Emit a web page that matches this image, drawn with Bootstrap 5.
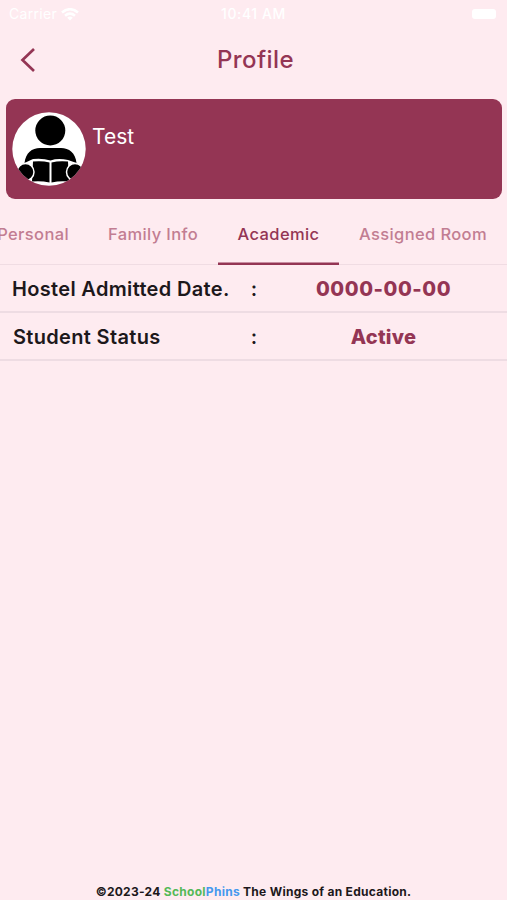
<!DOCTYPE html>
<html lang="en">
<head>
<meta charset="utf-8">
<meta name="viewport" content="width=device-width, initial-scale=1">
<title>Profile</title>
<link rel="stylesheet" href="https://cdn.jsdelivr.net/npm/bootstrap@5.3.0/dist/css/bootstrap.min.css">
<style>
  :root { --wine: #943554; --blush: #feebf0; }
  body { background: var(--blush); font-family: Inter, "Liberation Sans", sans-serif; color: #1d181b; }
  svg { display: block; flex: none; }
  .status-bar { height: 28px; color: #fff; font-size: 14px; line-height: 28px; padding: 0 11px 0 9px; }
  .status-side { flex: 1 1 0; }
  .carrier { letter-spacing: .3px; }
  .clock { letter-spacing: .6px; padding-left: 2px; }
  .battery { width: 24px; height: 10px; border-radius: 3px; background: #fff; }
  .app-bar { height: 64px; color: var(--wine); padding: 0 20px; }
  .app-title { font-size: 24px; line-height: 32px; letter-spacing: .4px; font-weight: 450; padding-left: 1px; }
  .side { width: 16px; }
  .profile-card { height: 100px; margin: 6.5px 5px 0 6px; border-radius: 9px; background: var(--wine); padding: 13px 6px; }
  .avatar { width: 74px; height: 74px; margin-left: -.5px; }
  .person { font-size: 21px; line-height: 28px; margin: 11px 0 0 6.500px; letter-spacing: 0; }
  .tab-strip { height: 66.5px; border-bottom: 1px solid #f0dce3; }
  .tab-strip .nav-link { flex: none; padding: 0; height: 66px; line-height: 71px; font-size: 16.5px; font-weight: 450; letter-spacing: .37px; color: #c27d92; text-align: center; white-space: nowrap; }
  .tab-strip .nav-link.active { color: var(--wine); box-shadow: inset 0 -2.5px var(--wine); }
  .tab-strip .t1 { width: 89px; margin-left: -20px; text-align: right; }
  .t2 { width: 130px; margin-left: 19px; }
  .t3 { width: 121px; }
  .t4 { width: 168px; }
  .info-row { height: 48px; border-bottom: 2px solid #eedce3; font-size: 20px; font-weight: 600; line-height: 48px; }
  .info-label { width: 236px; padding-left: 12px; letter-spacing: .33px; white-space: nowrap; }
  .info-label.status { padding-left: 13px; }
  .info-colon { width: 36px; text-align: center; }
  .info-value { color: var(--wine); font-weight: 800; text-align: center; padding-right: 12px; letter-spacing: .3px; }
  .info-value.date { letter-spacing: .55px; }
  .foot { font-size: 12px; line-height: 16px; font-weight: 650; color: #1d181b; letter-spacing: .28px; }
  .green { color: #55b957; }
  .blue { color: #4599ee; }
</style>
</head>
<body>
<div class="d-flex flex-column vh-100 overflow-hidden">
  <div class="status-bar d-flex align-items-center">
    <div class="status-side d-flex align-items-center">
      <span class="carrier">Carrier</span>
      <svg class="ms-1" width="18" height="13" viewBox="0 0 18 13" fill="none" stroke="#fff" stroke-width="2.6"><path d="M1 4.500Q9-2 17 4.500M4 7.700Q9 3.500 14 7.700"/><path d="M6.200 9.800Q9 7.300 11.800 9.800L9 12.600Z" fill="#fff" stroke="none"/></svg>
    </div>
    <span class="fw-medium clock">10:41 AM</span>
    <div class="status-side d-flex justify-content-end"><span class="battery"></span></div>
  </div>

  <header class="app-bar d-flex align-items-center justify-content-between">
    <svg class="side" height="26" viewBox="0 0 16 26" fill="none" stroke="currentColor" stroke-width="2.7"><path d="M14 2L2.500 13L14 24"/></svg>
    <h1 class="app-title m-0 ps-1">Profile</h1>
    <span class="side"></span>
  </header>

  <section class="profile-card d-flex align-items-start text-white">
    <svg class="avatar" viewBox="0 0 74 74">
      <defs><clipPath id="disc"><circle cx="37" cy="37" r="36.700"/></clipPath></defs>
      <circle cx="37" cy="37" r="36.700" fill="#fff"/>
      <g clip-path="url(#disc)">
        <circle cx="38.300" cy="18.500" r="15"/>
        <path d="M12.500 51C13.500 41 20 36 28 36H49C57 36 63.500 41 64.500 51L56 48Q46 46 38.500 48.500Q31 46 21 47Z"/>
        <path d="M21 49.500Q30 48.500 37.500 50.500V70.500Q29 68.500 20 69.500Z"/>
        <path d="M39.500 50.500Q47 48.500 56 49.500L57 69.500Q48 68.500 39.500 70.500Z"/>
        <g stroke="#fff" stroke-width="1.500">
          <circle cx="13.500" cy="60" r="8.500"/>
          <circle cx="63" cy="60" r="8.500"/>
        </g>
      </g>
    </svg>
    <div class="person">Test</div>
  </section>

  <nav class="tab-strip nav flex-nowrap">
    <a class="nav-link t1" href="#">Personal</a>
    <a class="nav-link t2" href="#">Family Info</a>
    <a class="nav-link t3 active" href="#">Academic</a>
    <a class="nav-link t4" href="#">Assigned Room</a>
  </nav>

  <main class="flex-grow-1">
    <div class="info-row d-flex"><div class="info-label">Hostel Admitted Date.</div><div class="info-colon">:</div><div class="info-value date flex-grow-1">0000-00-00</div></div>
    <div class="info-row d-flex"><div class="info-label status">Student Status</div><div class="info-colon">:</div><div class="info-value flex-grow-1">Active</div></div>
  </main>

  <footer class="foot text-center">©2023-24 <span class="green">School</span><span class="blue">Phins</span> The Wings of an Education.</footer>
</div>
<script src="https://cdn.jsdelivr.net/npm/bootstrap@5.3.0/dist/js/bootstrap.bundle.min.js"></script>
</body>
</html>
